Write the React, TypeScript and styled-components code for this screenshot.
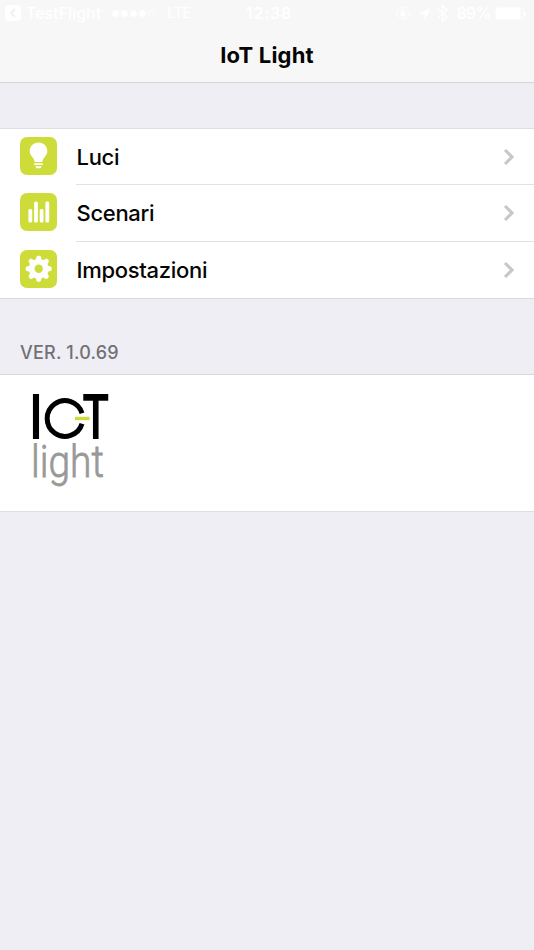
import React from "react";
import styled, { createGlobalStyle } from "styled-components";

const Global = createGlobalStyle`
  *, *::before, *::after { box-sizing: border-box; }
  body { margin: 0; background: #efeef4; font-family: Inter, "Liberation Sans", sans-serif; }
  svg { display: block; flex: none; }
`;

const Screen = styled.main`
  min-height: 950px;
  background: #efeef4;
  color: #050505;
`;

const Header = styled.header`
  height: 83px;
  background: #f7f7f7;
  border-bottom: 1px solid #d5d5d8;
`;

const StatusBar = styled.div`
  height: 26px;
  display: grid;
  grid-template-columns: 1fr auto 1fr;
  align-items: center;
  padding: 0 8px 0 5px;
  color: #fff;
  font-size: 16px;
`;

const StatusGroup = styled.div<{ $end?: boolean }>`
  display: flex;
  align-items: center;
  justify-content: ${(p) => (p.$end ? "flex-end" : "flex-start")};
`;

const StatusText = styled.span<{ $weight: number; $size: number; $left?: number; $spacing?: number }>`
  font-size: ${(p) => p.$size}px;
  font-weight: ${(p) => p.$weight};
  letter-spacing: ${(p) => p.$spacing ?? 0}px;
  margin-left: ${(p) => p.$left ?? 0}px;
  line-height: 20px;
  white-space: nowrap;
`;

const BatteryLevel = styled.span`
  margin-left: 4px;
`;

const Signal = styled.div`
  display: flex;
  gap: 2px;
  margin-left: 11px;
`;

const SignalDot = styled.i<{ $empty?: boolean }>`
  width: 7px;
  height: 7px;
  border-radius: 50%;
  border: 1px solid #fff;
  background: ${(p) => (p.$empty ? "transparent" : "#fff")};
`;

const Title = styled.h1`
  margin: 0;
  height: 56px;
  text-align: center;
  font-size: 22px;
  font-weight: 700;
  line-height: 58px;
  letter-spacing: 0.2px;
`;

const Menu = styled.nav`
  margin-top: 45px;
  background: #fff;
  border-top: 1px solid #dedee2;
  border-bottom: 1px solid #d9d9dd;
`;

const MenuRow = styled.a<{ $height: number }>`
  display: flex;
  height: ${(p) => p.$height}px;
  padding-left: 19.5px;
`;

const IconTile = styled.span`
  width: 37.5px;
  height: 37.5px;
  margin: 8px 19px 0 0;
  border-radius: 7px;
  background: #cddc39;
`;

const RowBody = styled.span<{ $last?: boolean }>`
  flex: 1;
  display: flex;
  align-items: center;
  justify-content: space-between;
  padding: 0 19px 0 0.5px;
  border-bottom: ${(p) => (p.$last ? "0" : "1px solid #e2e2e4")};
`;

const RowLabel = styled.span`
  font-size: 22px;
  font-weight: 500;
  line-height: 28px;
  letter-spacing: -0.3px;
`;

const Version = styled.h2`
  margin: 0;
  height: 75px;
  padding: 42px 20px 0;
  color: #717176;
  font-size: 18px;
  font-weight: 500;
  line-height: 24px;
  letter-spacing: 0.2px;
`;

const LogoPanel = styled.section`
  height: 138px;
  padding: 8px 0 0 20px;
  background: #fff;
  border-top: 1px solid #d9d9dd;
  border-bottom: 1px solid #dedee2;
`;

const BackIcon = () => (
  <svg width="16" height="16" viewBox="0 0 16 16" fill="none">
    <rect width="16" height="16" rx="4" fill="#fff" />
    <path d="M10 4 6 8l4 4" stroke="#f0f0f0" strokeWidth="1.8" />
  </svg>
);

const StatusIcons = () => (
  <svg width="56" height="20" viewBox="397 3 56 20" fill="none" stroke="#fff">
    <path d="M409 17.5a6 6 0 1 1 2-4M409 13l2 2 2-2" />
    <rect x="402.5" y="12.5" width="5" height="4" fill="#fff" stroke="none" />
    <path d="M403.5 13v-2a1.5 1.5 0 0 1 3 0v2" />
    <path d="m420 14 12.5-6-6 12.5V14Z" fill="#fff" stroke="none" />
    <path d="m440 9 9 8-4.5 4.5v-16L449 10l-9 8" strokeWidth="1.3" />
  </svg>
);

const Battery = () => (
  <svg width="31" height="13" viewBox="0 0 31 13" fill="none">
    <rect x=".5" y=".5" width="28" height="12" rx="1.5" stroke="#fbfbfb" />
    <path d="M1 1h24.5v11H1Z" fill="#fff" />
    <path d="M30 4.5v4" stroke="#fff" strokeWidth="2" />
  </svg>
);

const BulbIcon = () => (
  <svg width="37" height="37" viewBox="0 0 37 37" fill="#fff">
    <path d="M18.5 5.5c-5.1 0-8.8 3.7-8.8 8.5 0 5.2 4.7 6.5 5 11h7.6c.3-4.5 5-5.8 5-11 0-4.8-3.7-8.5-8.8-8.5Z" />
    <rect x="14" y="26.3" width="9" height="1.7" rx=".85" />
    <path d="M15.2 29.2h6.6l-1.3 2h-4Z" />
  </svg>
);

const BarsIcon = () => (
  <svg width="37" height="37" viewBox="0 0 37 37" fill="#fff">
    <rect x="8.4" y="16" width="3.8" height="13.5" rx="1.5" />
    <rect x="14.1" y="8.5" width="3.8" height="21" rx="1.5" />
    <rect x="19.7" y="16" width="3.8" height="13.5" rx="1.5" />
    <rect x="25.4" y="8.5" width="3.8" height="21" rx="1.5" />
  </svg>
);

const teeth = [0, 45, 90, 135, 180, 225, 270, 315];

const GearIcon = () => (
  <svg width="37" height="37" viewBox="0 0 37 37" fill="#fff">
    <circle cx="18.7" cy="18.8" r="9.8" />
    {teeth.map((angle) => (
      <path key={angle} d="M14.7 10.8Q16.3 9 16.5 7 16.7 5.8 18 5.8h1.4q1.3 0 1.5 1.2.2 2 1.8 3.8Z" transform={`rotate(${angle} 18.7 18.8)`} />
    ))}
    <circle cx="18.7" cy="18.8" r="4.2" fill="#cddc39" />
  </svg>
);

const Chevron = () => (
  <svg width="12" height="18" viewBox="0 0 12 18" fill="none">
    <path d="m2 2 7 7-7 7" stroke="#c7c7cc" strokeWidth="3.1" />
  </svg>
);

const LogoSvg = styled.svg`
  overflow: visible;
`;

const LogoText = styled.text<{ $thin?: boolean }>`
  font-family: ${(p) => (p.$thin ? "Roboto" : "Inter")}, sans-serif;
  font-size: ${(p) => (p.$thin ? 44 : 62)}px;
  font-weight: ${(p) => (p.$thin ? 300 : 600)};
  fill: ${(p) => (p.$thin ? "#999" : "#000")};
  stroke: ${(p) => (p.$thin ? "#999" : "none")};
  stroke-width: 0.8px;
`;

const Logo = () => (
  <LogoSvg width="100" height="110" viewBox="20 383 100 110" role="img" aria-label="IoT light">
    <LogoText x="29.6" y="439" textLength="13" lengthAdjust="spacingAndGlyphs">I</LogoText>
    <path d="M82 413.3A17.8 17.8 0 1 0 82 423.7" fill="none" stroke="#000" strokeWidth="5" />
    <LogoText x="81.4" y="439" textLength="28.5" lengthAdjust="spacingAndGlyphs">T</LogoText>
    <rect x="75" y="416.8" width="14.5" height="3.4" fill="#cddc39" stroke="#fff" strokeWidth="1" paintOrder="stroke" />
    <LogoText $thin x="31" y="477" textLength="73" lengthAdjust="spacingAndGlyphs">light</LogoText>
  </LogoSvg>
);

const items = [
  { label: "Luci", Icon: BulbIcon, height: 56 },
  { label: "Scenari", Icon: BarsIcon, height: 57 },
  { label: "Impostazioni", Icon: GearIcon, height: 56 },
];

export default function App() {
  return (
    <Screen>
      <Global />
      <Header>
        <StatusBar>
          <StatusGroup>
            <BackIcon />
            <StatusText $weight={500} $size={16} $left={5}>TestFlight</StatusText>
            <Signal>
              {[0, 1, 2, 3, 4].map((dot) => <SignalDot key={dot} $empty={dot === 4} />)}
            </Signal>
            <StatusText $weight={400} $size={15} $left={12} $spacing={-0.8}>LTE</StatusText>
          </StatusGroup>
          <StatusText $weight={600} $size={16} $spacing={0.8} $left={7}>12:38</StatusText>
          <StatusGroup $end>
            <StatusIcons />
            <StatusText $weight={500} $size={16} $left={5} $spacing={-0.5}>89%</StatusText>
            <BatteryLevel><Battery /></BatteryLevel>
          </StatusGroup>
        </StatusBar>
        <Title>IoT Light</Title>
      </Header>
      <Menu>
        {items.map(({ label, Icon, height }, index) => (
          <MenuRow key={label} $height={height}>
            <IconTile><Icon /></IconTile>
            <RowBody $last={index === items.length - 1}>
              <RowLabel>{label}</RowLabel>
              <Chevron />
            </RowBody>
          </MenuRow>
        ))}
      </Menu>
      <Version>VER. 1.0.69</Version>
      <LogoPanel><Logo /></LogoPanel>
    </Screen>
  );
}
